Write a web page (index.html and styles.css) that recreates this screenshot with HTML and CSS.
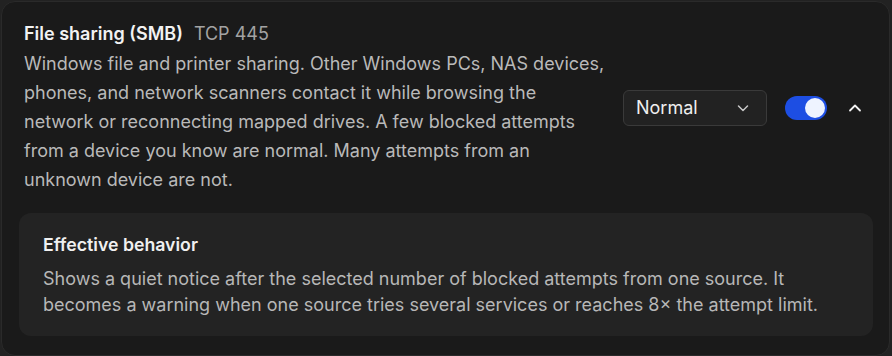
FILE: index.html
```html
<!DOCTYPE html>
<html lang="en">
<head>
<meta charset="utf-8">
<link rel="stylesheet" href="styles.css">
</head>
<body>
<section class="card">
  <div class="row">
    <div class="info">
      <div class="title-line"><span class="title">File sharing (SMB)</span><span class="port">TCP 445</span></div>
      <p class="desc">Windows file and printer sharing. Other Windows PCs, NAS devices, phones, and network scanners contact it while browsing the network or reconnecting mapped drives. A few blocked attempts from a device you know are normal. Many attempts from an unknown device are not.</p>
    </div>
    <div class="controls">
      <button class="select" type="button"><span>Normal</span>
        <svg width="14" height="14" viewBox="0 0 14 14"><path d="M2.5 5l4.5 4.5L11.5 5" fill="none" stroke="#c8c8c8" stroke-width="1.5" stroke-linecap="round" stroke-linejoin="round"/></svg>
      </button>
      <span class="toggle"><span class="knob"></span></span>
      <svg class="collapse" width="16" height="16" viewBox="0 0 16 16"><path d="M3 10.5l5-5 5 5" fill="none" stroke="#f2f2f2" stroke-width="1.8" stroke-linecap="round" stroke-linejoin="round"/></svg>
    </div>
  </div>
  <div class="effective">
    <h3 class="eff-title">Effective behavior</h3>
    <p class="eff-text">Shows a quiet notice after the selected number of blocked attempts from one source. It becomes a warning when one source tries several services or reaches 8× the attempt limit.</p>
  </div>
</section>
</body>
</html>
```
FILE: styles.css
```css
html, body {
  margin: 0;
  padding: 0;
  background: #222222;
}
body {
  font-family: Inter, "Noto Sans", sans-serif;
  padding: 1px 2px 1px 1px;
}
.card {
  background: #1a1a1a;
  border: 1px solid #2a2a2a;
  border-radius: 14px;
  padding: 19px 16px 19px 17px;
}
.row {
  display: flex;
  align-items: center;
  gap: 15px;
  padding: 0 10px 0 5px;
}
.info {
  flex: 1;
  min-width: 0;
}
.title-line {
  line-height: 26px;
  margin-bottom: 2px;
}
.title {
  font-size: 18px;
  font-weight: 600;
  color: #f2f2f2;
}
.port {
  margin-left: 11px;
  font-size: 18px;
  color: #a3a3a3;
}
.desc {
  margin: 0;
  font-size: 18px;
  line-height: 29px;
  color: #b9b9b9;
}
.controls {
  display: flex;
  align-items: center;
}
.select {
  display: flex;
  align-items: center;
  justify-content: space-between;
  width: 144px;
  height: 36px;
  box-sizing: border-box;
  padding: 0 16px 0 12px;
  background: #222222;
  border: 1px solid #3a3a3a;
  border-radius: 6px;
  font-family: inherit;
  font-size: 18px;
  color: #efefef;
}
.toggle {
  margin-left: 18px;
  width: 42px;
  height: 24px;
  border-radius: 12px;
  background: #1d4ee3;
  display: flex;
  align-items: center;
  justify-content: flex-end;
  padding: 0 2px;
  box-sizing: border-box;
}
.knob {
  width: 20px;
  height: 20px;
  border-radius: 50%;
  background: #eef3ff;
}
.collapse {
  margin-left: 20px;
  display: block;
}
.effective {
  margin-top: 19px;
  background: #232323;
  border-radius: 12px;
  padding: 20px 24px 18px;
}
.eff-title {
  margin: 0 0 9px;
  font-size: 17.7px;
  line-height: 24px;
  font-weight: 600;
  color: #f0f0f0;
}
.eff-text {
  margin: 0;
  font-size: 18px;
  line-height: 26px;
  color: #b7b7b7;
}
```
